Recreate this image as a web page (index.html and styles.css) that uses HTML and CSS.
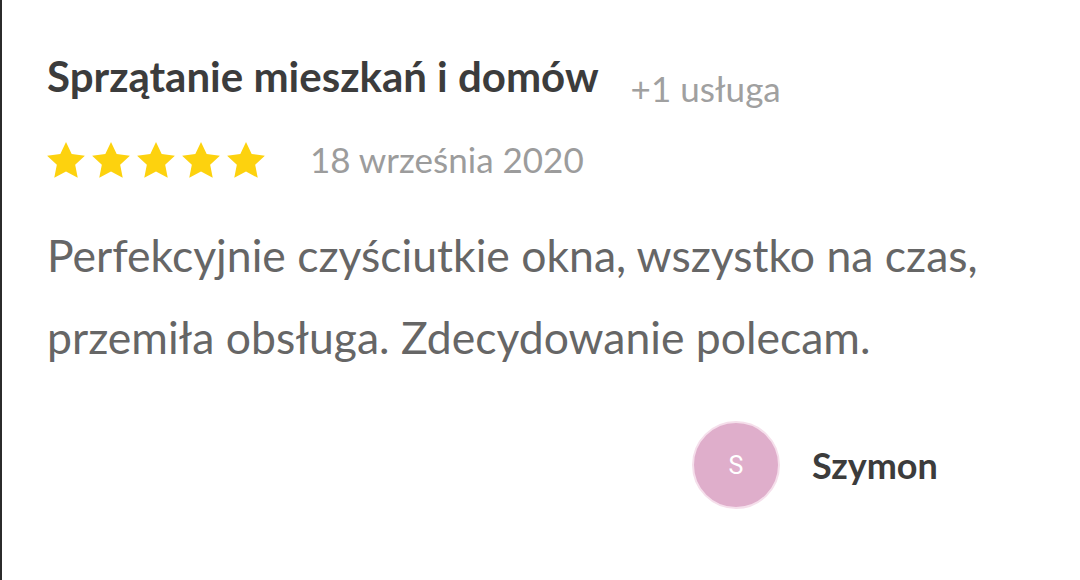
FILE: index.html
```html
<!DOCTYPE html>
<html lang="pl">
<head>
<meta charset="utf-8">
<link rel="stylesheet" href="styles.css">
</head>
<body>
<div class="card">
  <div class="head">
    <h1 class="title">Sprzątanie mieszkań i domów</h1>
    <span class="more">+1 usługa</span>
  </div>
  <div class="meta">
    <div class="stars">
      <svg class="star" viewBox="0 0 24 24"><path d="M12 1.6l3.1 6.6 7.2.9-5.3 5 1.4 7.1L12 17.7l-6.4 3.5 1.4-7.1-5.3-5 7.2-.9z"/></svg>
      <svg class="star" viewBox="0 0 24 24"><path d="M12 1.6l3.1 6.6 7.2.9-5.3 5 1.4 7.1L12 17.7l-6.4 3.5 1.4-7.1-5.3-5 7.2-.9z"/></svg>
      <svg class="star" viewBox="0 0 24 24"><path d="M12 1.6l3.1 6.6 7.2.9-5.3 5 1.4 7.1L12 17.7l-6.4 3.5 1.4-7.1-5.3-5 7.2-.9z"/></svg>
      <svg class="star" viewBox="0 0 24 24"><path d="M12 1.6l3.1 6.6 7.2.9-5.3 5 1.4 7.1L12 17.7l-6.4 3.5 1.4-7.1-5.3-5 7.2-.9z"/></svg>
      <svg class="star" viewBox="0 0 24 24"><path d="M12 1.6l3.1 6.6 7.2.9-5.3 5 1.4 7.1L12 17.7l-6.4 3.5 1.4-7.1-5.3-5 7.2-.9z"/></svg>
    </div>
    <span class="date">18 września 2020</span>
  </div>
  <p class="text">Perfekcyjnie czyściutkie okna, wszystko na czas, przemiła obsługa. Zdecydowanie polecam.</p>
  <div class="author">
    <div class="avatar">S</div>
    <span class="name">Szymon</span>
  </div>
</div>
</body>
</html>
```
FILE: styles.css
```css
html, body {
  margin: 0;
  padding: 0;
  background: #ffffff;
}
body {
  width: 1080px;
  height: 580px;
  overflow: hidden;
  font-family: Lato, "Noto Sans", sans-serif;
}
.card {
  box-sizing: border-box;
  height: 580px;
  border-left: 2px solid #2b2b2b;
  padding: 51px 0 0 45px;
}
.head {
  display: flex;
  align-items: flex-start;
  gap: 32px;
}
.title {
  margin: 0;
  font-size: 42px;
  font-weight: 700;
  color: #3c3c3c;
  line-height: 50px;
}
.more {
  margin-top: 17px;
  font-size: 35px;
  color: #a0a0a0;
  line-height: 40px;
}
.meta {
  display: flex;
  align-items: center;
  height: 44px;
  margin-top: 31px;
  gap: 42px;
}
.stars {
  display: flex;
  gap: 1px;
  margin-left: -3px;
}
.star {
  width: 44px;
  height: 44px;
  fill: #fdd20e;
}
.date {
  font-size: 35px;
  line-height: 40px;
  margin-bottom: 5px;
  color: #9c9c9c;
}
.text {
  margin: 31px 0 0;
  width: 960px;
  font-size: 44.5px;
  line-height: 82px;
  color: #666666;
}
.author {
  display: flex;
  align-items: center;
  gap: 32px;
  margin: 43px 0 0 645px;
}
.avatar {
  box-sizing: border-box;
  width: 88px;
  height: 88px;
  border-radius: 50%;
  background: #dfaecb;
  border: 2px solid #f5dfeb;
  color: #ffffff;
  font-family: Roboto, sans-serif;
  font-size: 25px;
  display: flex;
  align-items: center;
  justify-content: center;
}
.name {
  font-size: 36px;
  font-weight: 700;
  color: #3c3c3c;
}
```
